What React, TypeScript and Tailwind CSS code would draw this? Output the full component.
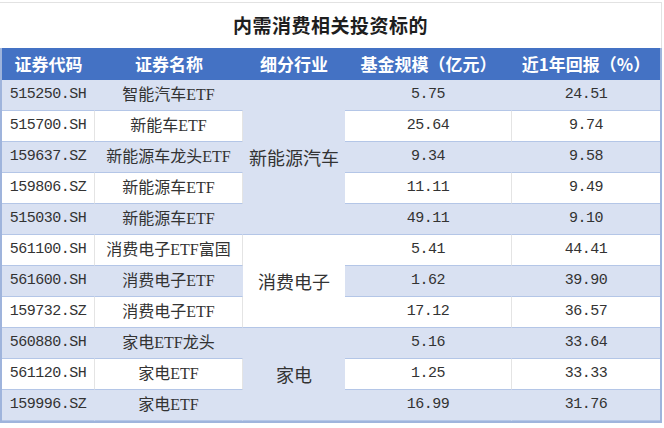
const rows = [
  { code: "515250.SH", name: "智能汽车ETF", size: "5.75", ret: "24.51" },
  { code: "515700.SH", name: "新能车ETF", size: "25.64", ret: "9.74" },
  { code: "159637.SZ", name: "新能源车龙头ETF", size: "9.34", ret: "9.58" },
  { code: "159806.SZ", name: "新能源车ETF", size: "11.11", ret: "9.49" },
  { code: "515030.SH", name: "新能源车ETF", size: "49.11", ret: "9.10" },
  { code: "561100.SH", name: "消费电子ETF富国", size: "5.41", ret: "44.41" },
  { code: "561600.SH", name: "消费电子ETF", size: "1.62", ret: "39.90" },
  { code: "159732.SZ", name: "消费电子ETF", size: "17.12", ret: "36.57" },
  { code: "560880.SH", name: "家电ETF龙头", size: "5.16", ret: "33.64" },
  { code: "561120.SH", name: "家电ETF", size: "1.25", ret: "33.33" },
  { code: "159996.SZ", name: "家电ETF", size: "16.99", ret: "31.76" },
];

// merged 细分行业 cells, keyed by first row
const groups: Record<number, { label: string; span: string; bg: string }> = {
  0: { label: "新能源汽车", span: "row-span-5", bg: "bg-[#d9e1f2]" },
  5: { label: "消费电子", span: "row-span-3", bg: "bg-white" },
  8: { label: "家电", span: "row-span-3", bg: "bg-[#d9e1f2]" },
};

const mono = "font-['Liberation_Mono',monospace] text-[15px] tracking-[-0.5px]";
const cjk = "font-['Liberation_Serif','Noto_Sans_CJK_SC',serif] text-[16px]";

export default function App() {
  return (
    <div className="w-[664px] h-[428px] bg-white pt-[2px] text-[#333]">
      <div className="w-[662px] h-[46px] border-t border-r border-[#e2e2e2] flex items-center justify-center">
        <h1 className="font-['Noto_Sans_CJK_SC',sans-serif] font-bold text-[19px] text-[#1e1e1e] tracking-[0.5px]">
          内需消费相关投资标的
        </h1>
      </div>

      <div className="w-[662px] grid grid-cols-[93px_148px_102px_167px_148px] grid-rows-[32px_repeat(11,31px)] border-l-2 border-r-2 border-b-2 border-[#9fb4dc]">
        {["证券代码", "证券名称", "细分行业", "基金规模（亿元）", "近1年回报（%）"].map((h) => (
          <div
            key={h}
            className="bg-[#4472c4] text-white font-['Noto_Sans_CJK_SC',sans-serif] font-bold text-[17px] flex items-center justify-center"
          >
            {h}
          </div>
        ))}

        {rows.map((r, i) => {
          const light = i % 2 === 0;
          const bg = light ? "bg-[#d9e1f2]" : "bg-white";
          const line = light ? "border-r-[#d9e1f2]" : "border-r-[#e4e4e4]";
          const cell = `${bg} border-b border-b-[#b4c6e7] border-r ${line} flex items-center justify-center`;
          const g = groups[i];
          return [
            <div key={`c${i}`} className={`${cell} ${mono}`}>
              {r.code}
            </div>,
            <div key={`n${i}`} className={`${cell} ${cjk}`}>
              {r.name}
            </div>,
            g ? (
              <div
                key={`g${i}`}
                className={`${g.span} ${g.bg} border-b border-b-[#b4c6e7] flex items-center justify-center font-['Noto_Sans_CJK_SC',sans-serif] text-[18px]`}
              >
                {g.label}
              </div>
            ) : null,
            <div key={`s${i}`} className={`${cell} ${mono}`}>
              {r.size}
            </div>,
            <div key={`r${i}`} className={`${bg} border-b border-b-[#b4c6e7] flex items-center justify-center ${mono}`}>
              {r.ret}
            </div>,
          ];
        })}
      </div>
    </div>
  );
}
